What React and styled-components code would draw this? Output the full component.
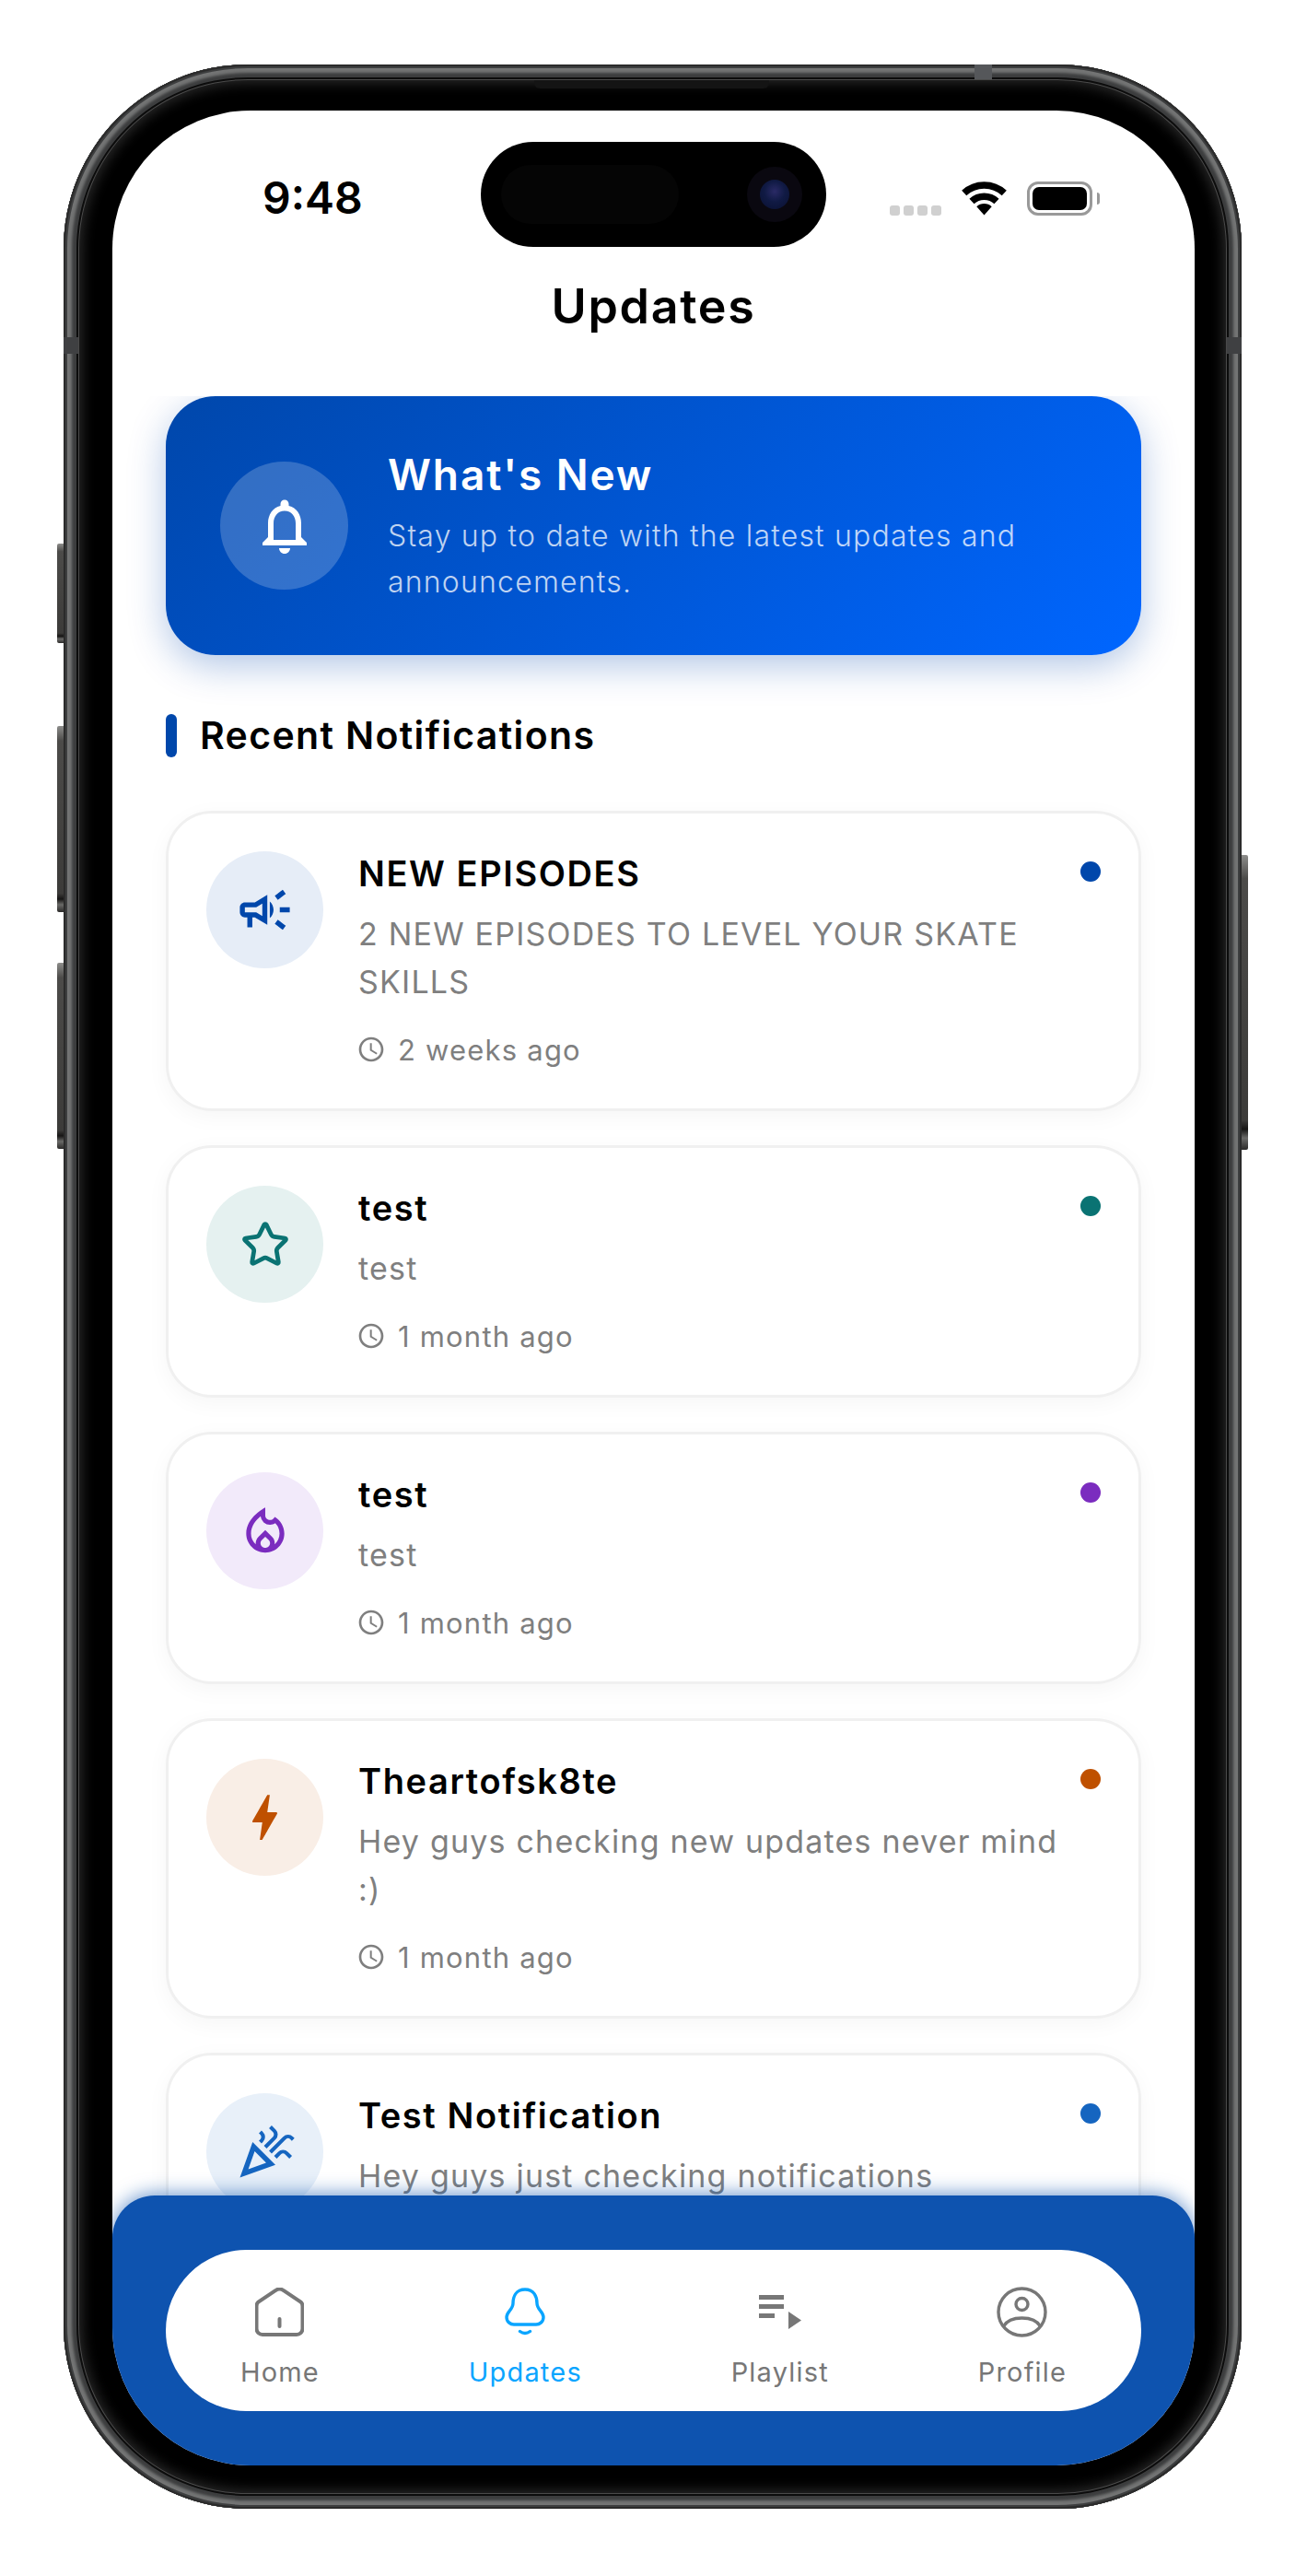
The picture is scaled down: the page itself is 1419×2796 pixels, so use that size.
import React from "react";
import styled, { createGlobalStyle } from "styled-components";
import {
  MdOutlineCampaign,
  MdOutlineLocalFireDepartment,
  MdBolt,
  MdOutlineCelebration,
  MdOutlineNotifications,
  MdAccessTime,
} from "react-icons/md";
import { Star } from "lucide-react";

const notifications = [
  { id: 1, title: "NEW EPISODES", body: "2 NEW EPISODES TO LEVEL YOUR SKATE SKILLS", time: "2 weeks ago", color: "#0047ab", tint: "#e6edf7", Icon: MdOutlineCampaign, size: 65 },
  { id: 2, title: "test", body: "test", time: "1 month ago", color: "#0a7373", tint: "#e5f1f0", Icon: Star, size: 54, iconProps: { strokeWidth: 2.1 } },
  { id: 3, title: "test", body: "test", time: "1 month ago", color: "#7b2cbf", tint: "#f2eafa", Icon: MdOutlineLocalFireDepartment, size: 62 },
  { id: 4, title: "Theartofsk8te", body: "Hey guys checking new updates never mind :)", time: "1 month ago", color: "#bf5000", tint: "#f9eee6", Icon: MdBolt, size: 65 },
  { id: 5, title: "Test Notification", body: "Hey guys just checking notifications", time: "1 month ago", color: "#1565c0", tint: "#e8f0f9", Icon: MdOutlineCelebration, size: 66 },
];

function HomeIcon() {
  return (
    <svg width="53" height="53" viewBox="0 0 53 53" fill="none" stroke="currentColor" strokeWidth="4" strokeLinecap="round">
      <path d="M8 51H45a6.5 6.5 0 0 0 6.5-6.5V20a6 6 0 0 0-2-4.5L31 3.2a7 7 0 0 0-9 0L3.500 15.500a6 6 0 0 0-2 4.500V44.500A6.500 6.500 0 0 0 8 51Z" />
      <path d="M26.500 34V42" />
    </svg>
  );
}

function BellIcon() {
  return (
    <svg width="44" height="53" viewBox="0 0 44 53" fill="none" stroke="currentColor" strokeWidth="3.4" strokeLinecap="round">
      <path d="M22 2C12 2 9 10 9 17C9 24 2 26 2 32C2 37 6 40 10 40H34C38 40 42 37 42 32C42 26 35 24 35 17C35 10 32 2 22 2Z" />
      <path d="M16.500 47.500Q22 51.500 27.500 47.500" />
    </svg>
  );
}

function PlaylistIcon() {
  return (
    <svg width="46" height="37" viewBox="0 0 46 37" fill="currentColor">
      <rect x="0" y="0" width="27" height="5" />
      <rect x="0" y="10" width="27" height="5" />
      <rect x="0" y="20" width="17" height="5" />
      <path d="M32 18L46 27.500L32 37Z" />
    </svg>
  );
}

function ProfileIcon() {
  return (
    <svg width="55" height="55" viewBox="0 0 55 55" fill="none" stroke="currentColor" strokeWidth="3.400">
      <circle cx="27.500" cy="27.500" r="25.500" />
      <circle cx="27.500" cy="19" r="6.500" />
      <path d="M7.500 43C11 37 19 34 27.500 34C36 34 44 37 47.500 43" />
    </svg>
  );
}

function WifiIcon() {
  return (
    <svg width="49" height="37" viewBox="0 0 49 37" fill="none" stroke="#000">
      <path d="M2.700 12.600A32 32 0 0 1 46.300 12.600" strokeWidth="7.500" />
      <path d="M11 21.600A19.750 19.750 0 0 1 38 21.600" strokeWidth="7.500" />
      <path d="M24.500 36.500L16.300 27.200A12 12 0 0 1 32.700 27.200Z" fill="#000" stroke="none" />
    </svg>
  );
}

const tabs = [
  { label: "Home", Icon: HomeIcon },
  { label: "Updates", Icon: BellIcon, active: true },
  { label: "Playlist", Icon: PlaylistIcon },
  { label: "Profile", Icon: ProfileIcon },
];

export default function App() {
  return (
    <>
      <GlobalStyle />
      <Frame>
        <SideButton $side="left" $top={520} $height={108} />
        <SideButton $side="left" $top={718} $height={202} />
        <SideButton $side="left" $top={975} $height={202} />
        <SideButton $side="right" $top={858} $height={320} />
        <Speaker />
        <AntennaTop />
        <AntennaSide $side="left" />
        <AntennaSide $side="right" />
        <Screen>
          <Island>
            <Sensor />
            <Camera>
              <Lens />
            </Camera>
          </Island>
          <StatusBar>
            <Clock>9:48</Clock>
            <StatusIcons>
              <Signal>
                <i />
                <i />
                <i />
                <i />
              </Signal>
              <WifiIcon />
              <Battery>
                <BatteryShell>
                  <BatteryFill />
                </BatteryShell>
                <BatteryNub />
              </Battery>
            </StatusIcons>
          </StatusBar>
          <PageTitle>Updates</PageTitle>
          <Content>
            <Hero>
              <HeroIcon>
                <MdOutlineNotifications size={72} color="#fff" />
              </HeroIcon>
              <div>
                <HeroTitle>What's New</HeroTitle>
                <HeroText>Stay up to date with the latest updates and announcements.</HeroText>
              </div>
            </Hero>
            <SectionTitle>Recent Notifications</SectionTitle>
            <List>
              {notifications.map((n) => (
                <Card key={n.id}>
                  <IconCircle $tint={n.tint} $color={n.color}>
                    <n.Icon size={n.size} {...n.iconProps} />
                  </IconCircle>
                  <CardBody>
                    <CardTitle>{n.title}</CardTitle>
                    <CardText>{n.body}</CardText>
                    <TimeRow>
                      <MdAccessTime size={32} />
                      {n.time}
                    </TimeRow>
                  </CardBody>
                  <Dot $color={n.color} />
                </Card>
              ))}
            </List>
          </Content>
          <BottomBar>
            <TabPill>
              {tabs.map((t) => (
                <Tab key={t.label} $active={t.active}>
                  <TabIcon>
                    <t.Icon />
                  </TabIcon>
                  <span>{t.label}</span>
                </Tab>
              ))}
            </TabPill>
          </BottomBar>
        </Screen>
      </Frame>
    </>
  );
}

const GlobalStyle = createGlobalStyle`
  html, body {
    margin: 0;
    background: #fff;
    font-family: Inter, "Liberation Sans", sans-serif;
  }
`;

const Frame = styled.div`
  position: relative;
  box-sizing: border-box;
  width: 1279px;
  height: 2653px;
  margin: 70px 0 73px 69px;
  padding: 50px 51px 47px 53px;
  border-radius: 200px;
  background: #000;
  box-shadow:
    inset 0 0 0 2px #2b2b2b,
    inset 0 0 0 4px #3d3e3f,
    inset 0 0 3px 9px #737474,
    inset 0 0 0 14px #3c3d3e,
    inset 0 0 0 16px #0c0c0c,
    inset 0 0 0 17px #4a4a4a,
    inset 0 0 14px 20px #2a2a2a;
`;

const SideButton = styled.div`
  position: absolute;
  top: ${(p) => p.$top}px;
  ${(p) => (p.$side === "left" ? "left: -7px;" : "right: -7px;")}
  width: 7px;
  height: ${(p) => p.$height}px;
  border-radius: ${(p) => (p.$side === "left" ? "2px 0 0 2px" : "0 2px 2px 0")};
  background: linear-gradient(180deg, #8d8d8b 0%, #4c4b49 8%, #3c3b39 90%, #161514 93%, #6a6a68 96%, #2b2a29 100%);
`;

const Speaker = styled.div`
  position: absolute;
  top: 17px;
  left: 511px;
  width: 255px;
  height: 9px;
  border-radius: 0 0 6px 6px;
  background: #141414;
`;

const AntennaTop = styled.div`
  position: absolute;
  top: 0;
  left: 989px;
  width: 19px;
  height: 16px;
  background: #55575a;
`;

const AntennaSide = styled.div`
  position: absolute;
  top: 296px;
  ${(p) => (p.$side === "left" ? "left: 0;" : "right: 0;")}
  width: 16px;
  height: 18px;
  background: #3f4042;
`;

const Screen = styled.div`
  position: relative;
  display: flex;
  flex-direction: column;
  width: 1175px;
  height: 2556px;
  border-radius: 150px;
  overflow: hidden;
  background: #fff;
`;

const Island = styled.div`
  position: absolute;
  top: 34px;
  left: 400px;
  z-index: 2;
  display: flex;
  align-items: center;
  justify-content: space-between;
  box-sizing: border-box;
  width: 375px;
  height: 114px;
  padding: 0 26px 0 22px;
  border-radius: 57px;
  background: #000;
`;

const Sensor = styled.div`
  width: 193px;
  height: 64px;
  border-radius: 32px;
  background: #050505;
`;

const Camera = styled.div`
  display: flex;
  align-items: center;
  justify-content: center;
  width: 60px;
  height: 60px;
  border-radius: 50%;
  background: #0a0810;
`;

const Lens = styled.div`
  width: 32px;
  height: 32px;
  border-radius: 50%;
  background: radial-gradient(circle at 50% 40%, #2a2a66 0%, #101a44 45%, #0a1030 100%);
`;

const StatusBar = styled.div`
  display: flex;
  align-items: center;
  justify-content: space-between;
  box-sizing: border-box;
  height: 120px;
  margin-bottom: 63px;
  padding: 70px 103px 0 163px;
  flex-shrink: 0;
`;

const Clock = styled.span`
  font-size: 48px;
  line-height: 50px;
  font-weight: 600;
  color: #000;
`;

const StatusIcons = styled.div`
  display: flex;
  align-items: flex-end;
  gap: 22px;
`;

const Signal = styled.div`
  display: flex;
  gap: 4px;
  & i {
    display: block;
    width: 11px;
    height: 11px;
    border-radius: 3px;
    background: #d0d0d0;
  }
`;

const Battery = styled.div`
  display: flex;
  align-items: center;
  gap: 5px;
`;

const BatteryShell = styled.div`
  box-sizing: border-box;
  width: 71px;
  height: 37px;
  padding: 3px;
  border: 3px solid #999;
  border-radius: 12px;
`;

const BatteryFill = styled.div`
  height: 100%;
  border-radius: 7px;
  background: #000;
`;

const BatteryNub = styled.div`
  width: 3px;
  height: 13px;
  border-radius: 0 3px 3px 0;
  background: #999;
`;

const PageTitle = styled.h1`
  flex-shrink: 0;
  margin: 0 0 67px;
  font-size: 52px;
  line-height: 60px;
  font-weight: 600;
  letter-spacing: 1.7px;
  text-align: center;
  color: #000;
`;

const Content = styled.main`
  flex: 1;
  min-height: 0;
  padding: 0 58px;
  overflow: hidden;
`;

const Hero = styled.section`
  display: flex;
  align-items: center;
  gap: 43px;
  box-sizing: border-box;
  height: 281px;
  padding: 0 59px;
  border-radius: 54px;
  background: linear-gradient(135deg, #0047ab 0%, #0066ff 100%);
  box-shadow: 0 12px 40px rgba(0, 71, 171, 0.3);
`;

const HeroIcon = styled.div`
  display: flex;
  align-items: center;
  justify-content: center;
  flex-shrink: 0;
  width: 139px;
  height: 139px;
  border-radius: 50%;
  background: rgba(255, 255, 255, 0.2);
`;

const HeroTitle = styled.h2`
  margin: 3px 0 14px;
  font-size: 46px;
  line-height: 56px;
  font-weight: 600;
  letter-spacing: 1.9px;
  color: #fff;
`;

const HeroText = styled.p`
  margin: 0;
  font-size: 32px;
  line-height: 50px;
  font-weight: 300;
  letter-spacing: 1.2px;
  color: rgba(255, 255, 255, 0.75);
`;

const SectionTitle = styled.h3`
  position: relative;
  margin: 64px 0 58px;
  padding-left: 37px;
  font-size: 41px;
  line-height: 47px;
  font-weight: 600;
  letter-spacing: 1.35px;
  color: #000;
  &::before {
    content: "";
    position: absolute;
    left: 0;
    top: 0;
    width: 12px;
    height: 47px;
    border-radius: 6px;
    background: #0047ab;
  }
`;

const List = styled.div`
  display: flex;
  flex-direction: column;
  gap: 37px;
`;

const Card = styled.article`
  display: flex;
  align-items: flex-start;
  box-sizing: border-box;
  padding: 41px 41px 46px;
  border: 3px solid #f0f0f0;
  border-radius: 50px;
  background: #fff;
  box-shadow: 0 6px 24px rgba(0, 0, 0, 0.04);
`;

const IconCircle = styled.div`
  display: flex;
  align-items: center;
  justify-content: center;
  flex-shrink: 0;
  width: 127px;
  height: 127px;
  margin-right: 38px;
  border-radius: 50%;
  background: ${(p) => p.$tint};
  color: ${(p) => p.$color};
`;

const CardBody = styled.div`
  flex: 1;
  min-width: 0;
`;

const CardTitle = styled.h4`
  margin: 0 0 16px;
  font-size: 38px;
  line-height: 48px;
  font-weight: 600;
  letter-spacing: 1.6px;
  color: #000;
`;

const CardText = styled.p`
  margin: 0;
  font-size: 34px;
  line-height: 52px;
  font-weight: 400;
  letter-spacing: 1.2px;
  color: #7f7f7f;
`;

const TimeRow = styled.div`
  display: flex;
  align-items: center;
  gap: 13px;
  height: 36px;
  margin-top: 29px;
  margin-left: -2px;
  font-size: 31px;
  letter-spacing: 1.2px;
  color: #7f7f7f;
`;

const Dot = styled.div`
  flex-shrink: 0;
  width: 22px;
  height: 22px;
  margin: 11px 0 0 12px;
  border-radius: 50%;
  background: ${(p) => p.$color};
`;

const BottomBar = styled.nav`
  position: relative;
  z-index: 1;
  flex-shrink: 0;
  box-sizing: border-box;
  height: 293px;
  padding: 59px 58px 0;
  border-radius: 46px 46px 0 0;
  background: #0e53af;
  box-shadow: 0 -2px 20px rgba(14, 83, 175, 0.6);
`;

const TabPill = styled.div`
  display: flex;
  align-items: flex-start;
  justify-content: space-around;
  box-sizing: border-box;
  height: 175px;
  padding-top: 37px;
  border-radius: 88px;
  background: #fff;
`;

const Tab = styled.div`
  display: flex;
  flex-direction: column;
  align-items: center;
  gap: 18px;
  font-size: 29px;
  line-height: 36px;
  letter-spacing: 1.2px;
  color: ${(p) => (p.$active ? "#0aa5ff" : "#777")};
`;

const TabIcon = styled.div`
  display: flex;
  align-items: center;
  justify-content: center;
  height: 60px;
`;
